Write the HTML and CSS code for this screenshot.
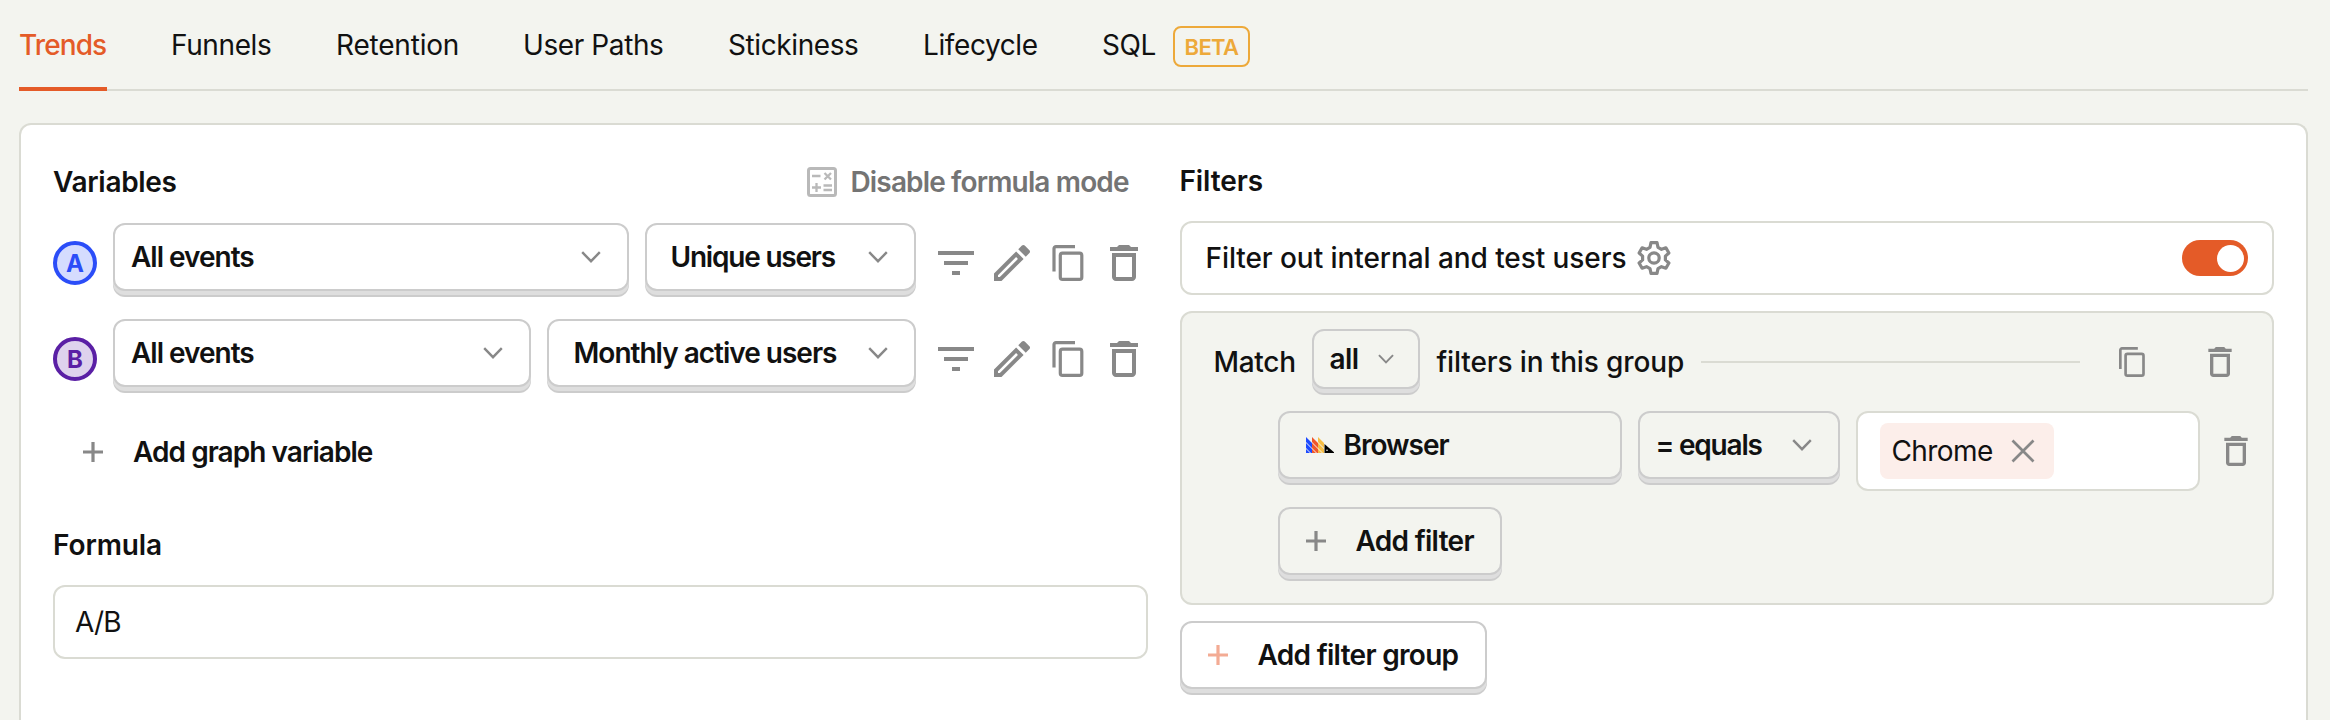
FILE: index.html
```html
<!DOCTYPE html>
<html lang="en">
<head>
<meta charset="utf-8">
<title>Insights</title>
<link rel="stylesheet" href="styles.css">
</head>
<body>
<svg class="sprite" width="0" height="0">
  <symbol id="chevron" viewBox="0 0 20 12"><path d="M1.2 1.2 10 10.2 18.8 1.2" fill="none" stroke="currentColor" stroke-width="2.4"/></symbol>
  <symbol id="plus" viewBox="0 0 20 20"><path d="M10 0v20M0 10h20" fill="none" stroke="currentColor" stroke-width="3.200"/></symbol>
  <symbol id="sort" viewBox="3 3 18 18"><path fill="currentColor" d="M10 18h4v-2h-4v2zM3 6v2h18V6H3zm3 7h12v-2H6v2z"/></symbol>
  <symbol id="pencil" viewBox="3 3 18 18"><path fill="currentColor" d="M14.06 9.02l.92.92L5.92 19H5v-.92l9.06-9.06M17.66 3c-.25 0-.51.1-.7.29l-1.83 1.83 3.75 3.75 1.83-1.83c.39-.39.39-1.02 0-1.41l-2.34-2.34c-.2-.2-.45-.29-.71-.29zm-3.6 3.19L3 17.25V21h3.75L17.81 9.94l-3.75-3.75z"/></symbol>
  <symbol id="copy" viewBox="0 0 36 36"><path d="M25 1.6H6a2 2 0 0 0-2 2V26.500" fill="none" stroke="currentColor" stroke-width="3.200"/><rect x="10.300" y="8.200" width="21.500" height="26.200" rx="2.200" fill="none" stroke="currentColor" stroke-width="3.200"/></symbol>
  <symbol id="trash" viewBox="3 3 18 18"><path fill="currentColor" d="M6 19c0 1.1.9 2 2 2h8c1.100 0 2-.9 2-2V7H6v12zM8 9h8v10H8V9zm7.500-5l-1-1h-5l-1 1H5v2h14V4z"/></symbol>
</svg>

<nav class="tabs">
  <a class="tab tab-active">Trends</a>
  <a class="tab tab-funnels">Funnels</a>
  <a class="tab tab-retention">Retention</a>
  <a class="tab tab-paths">User Paths</a>
  <a class="tab tab-stickiness">Stickiness</a>
  <a class="tab tab-lifecycle">Lifecycle</a>
  <a class="tab tab-sql">SQL <span class="beta">BETA</span></a>
</nav>

<main class="card">
  <section class="column">
    <header class="head">
      <h2>Variables</h2>
      <button class="mode">
        <svg width="30" height="30" viewBox="0 0 30 30" fill="none" stroke="currentColor"><rect x="1.500" y="1.500" width="27" height="27" rx="2" stroke-width="3"/><path d="M5 9h8.500M5 20.500h9M9.500 16v9M16.500 18.500h8.500M16.500 23h8.500M17.500 6l6.500 6.500M24 6l-6.500 6.500" stroke-width="2.300"/></svg>
        <span>Disable formula mode</span>
      </button>
    </header>

    <div class="series">
      <span class="letter letter-a">A</span>
      <button class="btn event-btn"><span>All events</span><svg class="chev"><use href="#chevron"/></svg></button>
      <button class="btn math-btn math-unique"><span>Unique users</span><svg class="chev"><use href="#chevron"/></svg></button>
      <div class="tools"><svg><use href="#sort"/></svg><svg><use href="#pencil"/></svg><svg><use href="#copy"/></svg><svg><use href="#trash"/></svg></div>
    </div>
    <div class="series">
      <span class="letter letter-b">B</span>
      <button class="btn event-btn"><span>All events</span><svg class="chev"><use href="#chevron"/></svg></button>
      <button class="btn math-btn math-monthly"><span>Monthly active users</span><svg class="chev"><use href="#chevron"/></svg></button>
      <div class="tools"><svg><use href="#sort"/></svg><svg><use href="#pencil"/></svg><svg><use href="#copy"/></svg><svg><use href="#trash"/></svg></div>
    </div>

    <button class="add-variable"><svg class="plus"><use href="#plus"/></svg><span>Add graph variable</span></button>

    <h2 class="formula-title">Formula</h2>
    <div class="formula">A/B</div>
  </section>

  <section class="column">
    <header class="head head-filters"><h2 class="filters-title">Filters</h2></header>
    <div class="internal">
      <span class="internal-text">Filter out internal and test users</span>
      <svg class="gear" width="34" height="34" viewBox="0 0 34 34" fill="none" stroke="currentColor" stroke-width="3.200" stroke-linejoin="round"><path d="M14 1.600h6l1 4.700 3.500 2 4.400-1.500 3 5.200-3.500 3.100v3.800l3.500 3.100-3 5.200-4.400-1.500-3.500 2-1 4.700h-6l-1-4.700-3.500-2-4.400 1.500-3-5.200 3.500-3.100v-3.800l-3.500-3.100 3-5.200 4.400 1.500 3.500-2z"/><circle cx="17" cy="17" r="5.200"/></svg>
      <span class="toggle"><span class="knob"></span></span>
    </div>

    <div class="group">
      <div class="group-head">
        <span class="match">Match</span>
        <button class="btn all-btn"><span>all</span><svg class="chev chev-sm"><use href="#chevron"/></svg></button>
        <span class="in-group">filters in this group</span>
        <span class="rule"></span>
        <svg class="icon-sm"><use href="#copy"/></svg>
        <svg class="icon-sm"><use href="#trash"/></svg>
      </div>
      <div class="filter">
        <button class="btn prop-btn">
          <svg width="28" height="16" viewBox="0 0 28 16"><path fill="#1d4aff" d="M0 0l6 6v5L0 5zM0 6l6 6v4h-1L0 11zM0 12l4 4H0z"/><path fill="#f0562a" d="M6 0l6 6v5L6 5zM6 6l6 6v4h-1l-5-5zM6 12l4 4H6z"/><path fill="#f6bd45" d="M12 0l6 6v5l-6-6zM12 6l6 6v4h-1l-5-5zM12 12l4 4h-4z"/><path d="M18.500 7l9.500 8.300V16h-9.500z"/><circle cx="21" cy="13.300" r=".8" fill="#fff"/></svg>
          <span>Browser</span>
        </button>
        <button class="btn op-btn"><span>= equals</span><svg class="chev"><use href="#chevron"/></svg></button>
        <div class="value"><span class="chip"><span>Chrome</span><svg width="24" height="24" viewBox="0 0 24 24"><path d="M1.500 1.500l21 21M22.500 1.500l-21 21" stroke="currentColor" stroke-width="2.700"/></svg></span></div>
        <svg class="icon-sm"><use href="#trash"/></svg>
      </div>
      <button class="btn add-btn add-filter"><svg class="plus"><use href="#plus"/></svg><span>Add filter</span></button>
    </div>
    <button class="btn add-btn add-group"><svg class="plus"><use href="#plus"/></svg><span>Add filter group</span></button>
  </section>
</main>
</body>
</html>
```
FILE: styles.css
```css
* { box-sizing: border-box; }
body {
  margin: 0;
  height: 720px;
  overflow: hidden;
  padding: 0 22px 0 19px;
  background: #f3f4ef;
  color: #111;
  font: 400 28px/40px Inter, sans-serif;
}
button {
  margin: 0;
  padding: 0;
  border: 0;
  background: none;
  color: inherit;
  font: inherit;
  font-weight: 600;
  text-align: left;
  white-space: nowrap;
}
svg { display: block; flex: none; color: #888; }
.sprite { position: absolute; }
h2 { margin: 0; font-size: 28px; font-weight: 600; line-height: 40px; letter-spacing: -0.3px; }

.tabs {
  display: flex;
  gap: 64px;
  height: 91px;
  border-bottom: 2px solid #dadbd3;
}
.tab { height: 91px; padding-top: 25px; white-space: nowrap; letter-spacing: -0.4px; }
.tab-active { width: 88px; color: #e45b28; border-bottom: 4px solid #e45b28; font-weight: 500; letter-spacing: -0.9px; }
.tab-funnels { width: 101px; }
.tab-retention { width: 123px; letter-spacing: -0.2px; }
.tab-paths { width: 141px; }
.tab-stickiness { width: 131px; }
.tab-lifecycle { width: 115px; }
.tab-sql { display: flex; gap: 17px; }
.beta {
  width: 77px;
  height: 41px;
  margin-top: 1px;
  border: 2px solid #eda93a;
  border-radius: 8px;
  color: #eda93a;
  font-size: 22px;
  font-weight: 600;
  line-height: 38px;
  letter-spacing: -0.6px;
  text-align: center;
}

.card {
  display: grid;
  grid-template-columns: 1fr 1fr;
  gap: 32px;
  height: 597px;
  margin-top: 32px;
  padding: 37px 32px 0;
  border: 2px solid #dadbd3;
  border-bottom: 0;
  border-radius: 12px 12px 0 0;
  background: #fff;
}
.column { min-width: 0; }
.head { display: flex; justify-content: space-between; height: 61px; }
.mode { display: flex; align-items: flex-start; gap: 14px; margin-right: 16px; color: #747474; letter-spacing: -0.85px; }
.mode svg { margin-top: 5px; color: #b9b9b9; }
.mode span { width: 281px; }

.btn {
  display: flex;
  align-items: center;
  flex: none;
  height: 68px;
  border: 2px solid #ccc;
  border-radius: 12px;
  background: #fff;
  box-shadow: 0 4px 0 #dedede, 0 6px 0 #ccc;
  letter-spacing: -1px;
}
.chev { width: 20px; height: 12px; margin-left: auto; margin-right: 26px; }
.chev-sm { width: 16px; height: 10px; margin-right: 24px; }

.series { display: flex; align-items: flex-start; height: 80px; margin-bottom: 16px; }
.letter {
  flex: none;
  width: 44px;
  height: 44px;
  margin: 18px 16px 0 0;
  border: 4px solid;
  border-radius: 50%;
  font-size: 24px;
  font-weight: 700;
  line-height: 37px;
  text-align: center;
}
.letter-a { color: #2b4df8; background: #d5dcfe; }
.letter-b { color: #5a1fa5; background: #ded2ed; }
.event-btn { flex: 1; padding-left: 16px; }
.math-btn { margin-left: 16px; }
.math-unique { width: 271px; padding-left: 24px; letter-spacing: -1.2px; }
.math-monthly { width: 369px; padding-left: 25px; }
.tools { display: flex; gap: 20px; margin: 22px 6px 0 22px; }
.tools svg { width: 36px; height: 36px; }

.plus { width: 20px; height: 20px; }
.add-variable { display: flex; align-items: center; gap: 30px; height: 40px; margin: 33px 0 0 30px; letter-spacing: -0.95px; }
.formula-title { margin-top: 53px; letter-spacing: -0.1px; }
.filters-title { letter-spacing: -0.1px; }
.formula {
  height: 74px;
  margin-top: 20px;
  padding: 15px 20px;
  border: 2px solid #dadbd3;
  border-radius: 12px;
  letter-spacing: -0.8px;
}

.head-filters { height: 60px; margin-top: -1px; }
.internal {
  display: flex;
  align-items: center;
  height: 74px;
  padding: 0 24px;
  border: 2px solid #dadbd3;
  border-radius: 12px;
  font-weight: 500;
  white-space: nowrap;
}
.internal-text { width: 420px; letter-spacing: -0.07px; }
.gear { margin-left: 11px; }
.toggle { width: 66px; height: 36px; margin-left: auto; padding: 5px 4px 4px 35px; border-radius: 18px; background: #e45b28; }
.knob { display: block; width: 27px; height: 27px; border-radius: 50%; background: #fff; }

.group {
  height: 294px;
  margin-top: 16px;
  padding: 16px 24px 0 32px;
  border: 2px solid #dadbd3;
  border-radius: 12px;
  background: #f3f4ef;
}
.group .btn { background: #f3f4ef; }
.group-head { display: flex; align-items: center; height: 66px; font-weight: 500; white-space: nowrap; }
.match { width: 98px; letter-spacing: -0.3px; }
.group .all-btn { align-self: flex-start; width: 108px; height: 60px; padding-left: 16px; letter-spacing: -0.6px; }
.in-group { width: 248px; margin-left: 17px; letter-spacing: -0.13px; }
.rule { flex: 1; height: 2px; margin: 0 37px 0 16px; background: #dadbd3; }
.icon-sm { width: 30px; height: 30px; }
.group-head .icon-sm + .icon-sm { margin-left: 58px; margin-right: 13px; }
.filter { display: flex; align-items: flex-start; height: 80px; margin: 16px 0 16px 64px; }
.prop-btn { width: 344px; gap: 10px; padding-left: 26px; }
.group .op-btn { width: 202px; margin-left: 16px; padding-left: 16px; letter-spacing: -1.2px; }
.value { flex: none; width: 344px; height: 80px; margin-left: 16px; padding: 10px 22px; border: 2px solid #dadbd3; border-radius: 12px; background: #fff; }
.chip { display: flex; align-items: center; width: 174px; height: 56px; padding-left: 12px; border-radius: 8px; background: #fceeea; }
.chip > span { width: 119px; letter-spacing: -0.6px; }
.filter .icon-sm { margin: 25px 0 0 21px; }
.add-btn { gap: 30px; padding-left: 26px; letter-spacing: -0.7px; }
.add-filter { width: 224px; margin-left: 64px; }
.add-group { width: 307px; margin-top: 16px; }
.add-group .plus { color: #f3ab94; }
```
